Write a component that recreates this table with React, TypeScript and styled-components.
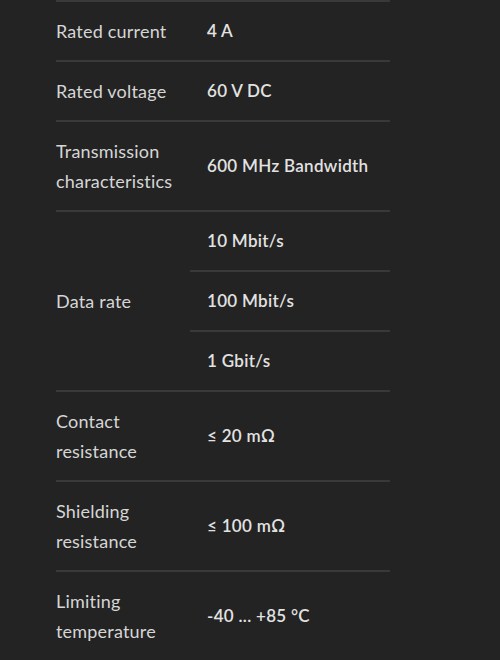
import React from 'react';
import styled, { createGlobalStyle } from 'styled-components';

const GlobalStyle = createGlobalStyle`
  html, body {
    margin: 0;
    padding: 0;
    background: #232323;
  }
  body {
    font-family: 'Lato', 'Noto Sans', sans-serif;
  }
`;

const Page = styled.div`
  padding-left: 56px;
  height: 660px;
  overflow: hidden;
  background: #232323;
`;

const Table = styled.table`
  width: 334px;
  border-collapse: collapse;
  table-layout: fixed;
`;

const LabelCell = styled.th`
  width: 134px;
  padding: 14px 0;
  border-top: 2px solid #393939;
  text-align: left;
  vertical-align: middle;
  font-weight: 400;
  font-size: 18px;
  letter-spacing: 0.2px;
  line-height: 30px;
  color: #d6d6d6;
`;

const ValueCell = styled.td`
  padding: 14px 0 14px 17px;
  border-top: 2px solid #393939;
  vertical-align: middle;
  font-weight: 600;
  font-size: 17px;
  letter-spacing: 0.3px;
  line-height: 30px;
  color: #e2e2e2;
  white-space: nowrap;
`;

interface Spec {
  label: React.ReactNode;
  values: string[];
}

const specs: Spec[] = [
  { label: 'Rated current', values: ['4 A'] },
  { label: 'Rated voltage', values: ['60 V DC'] },
  { label: <>Transmission<br />characteristics</>, values: ['600 MHz Bandwidth'] },
  { label: 'Data rate', values: ['10 Mbit/s', '100 Mbit/s', '1 Gbit/s'] },
  { label: <>Contact<br />resistance</>, values: ['≤ 20 mΩ'] },
  { label: <>Shielding<br />resistance</>, values: ['≤ 100 mΩ'] },
  { label: <>Limiting<br />temperature</>, values: ['-40 ... +85 °C'] },
];

const App = () => (
  <Page>
    <GlobalStyle />
    <Table>
      <tbody>
        {specs.map((spec, i) =>
          spec.values.map((value, j) => (
            <tr key={`${i}-${j}`}>
              {j === 0 && (
                <LabelCell rowSpan={spec.values.length}>{spec.label}</LabelCell>
              )}
              <ValueCell>{value}</ValueCell>
            </tr>
          ))
        )}
      </tbody>
    </Table>
  </Page>
);

export default App;
